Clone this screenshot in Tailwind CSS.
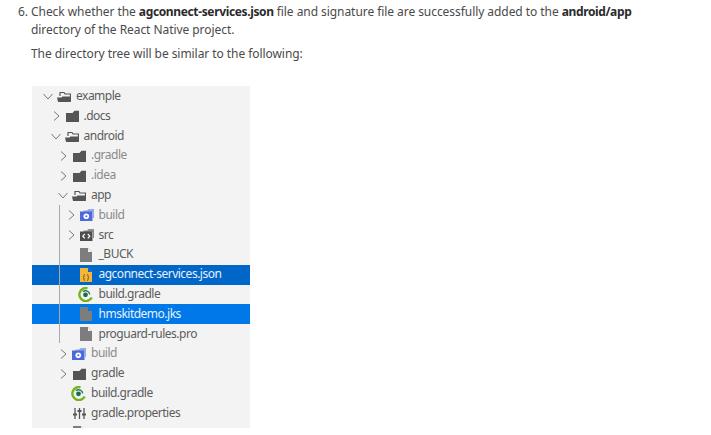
<!DOCTYPE html>
<html lang="en">
  <head>
    <meta charset="UTF-8" />
    <meta name="viewport" content="width=device-width, initial-scale=1.0" />
    <title>Directory tree</title>
    <script src="https://cdn.jsdelivr.net/npm/@tailwindcss/browser@4"></script>
  </head>
  <body class="bg-white h-[435px] overflow-hidden font-['Noto_Sans',sans-serif] text-[12px] tracking-[-0.06px] text-[#4a4a4a]">
    <svg class="hidden">
      <symbol id="chev-r" viewBox="0 0 10 10"><path d="M3 .5l5 4.500-5 4.500" fill="none" stroke="#777" stroke-width="1"/></symbol>
      <symbol id="chev-d" viewBox="0 0 10 10"><path d="M.5 3l4.500 5 4.500-5" fill="none" stroke="#777" stroke-width="1"/></symbol>
      <symbol id="open" viewBox="0 0 14 11"><path d="M3 5V1.500h4L8 3h5.500v7.500" fill="none" stroke="#555" stroke-width="1.200"/><path d="M0 6.500h4.500L5.500 5.500H13.800V11H1z" fill="#555"/></symbol>
      <symbol id="closed" viewBox="0 0 13 12"><path d="M0 3h6.500L8.500 0.800H13V12H0z" fill="#555"/></symbol>
      <symbol id="build" viewBox="0 0 14 12"><path d="M3.500 1.500h3.500L8.500 0H14v9h-1V3H3.500z" fill="#9aa8e4"/><path d="M0 2.500h12.500V12H0z" fill="#4a69dc"/><circle cx="6.300" cy="7.200" r="2.800" fill="#fff"/><circle cx="6.300" cy="7.200" r="1" fill="#4a69dc"/></symbol>
      <symbol id="src" viewBox="0 0 14 12"><path d="M3.500 1.500h3.500L8.500 0H14v9h-1V3H3.500z" fill="#8f8f8f"/><path d="M0 2.500h12.500V12H0z" fill="#4d4d4d"/><path d="M4.800 5L2.800 7.200l2 2.200M7.800 5l2 2.200-2 2.200" fill="none" stroke="#fff" stroke-width="1.200"/></symbol>
      <symbol id="file" viewBox="0 0 12 14"><path d="M0 0H8L12 4V14H0z" fill="#7d7d7d"/><path d="M8 0V4H12z" fill="#f3f3f3"/></symbol>
      <symbol id="file-sel" viewBox="0 0 12 14"><path d="M0 0H8L12 4V14H0z" fill="#7d7d7d"/><path d="M8 0V4H12z" fill="#0078e7"/></symbol>
      <symbol id="json" viewBox="0 0 12 14"><path d="M0 0H8L12 4V14H0z" fill="#f2b63c"/><path d="M8 0V4H12z" fill="#0066c8"/><path d="M4.800 6.500c-1 0-.8.800-.8 1.800 0 .7-.4 1-.9 1.200.5.200.9.500.9 1.200 0 1-.2 1.800.8 1.800M7.200 6.500c1 0 .8.800.8 1.800 0 .7.400 1 .9 1.200-.5.200-.9.500-.9 1.200 0 1 .2 1.800-.8 1.800" fill="none" stroke="#6b4800" stroke-width=".9"/></symbol>
      <symbol id="gradle" viewBox="0 0 15 15"><path d="M13.700 10.500A6.500 6.500 0 1 1 9.500 1.300" fill="none" stroke="#76b31c" stroke-width="2.400"/><path d="M5 4.700A4.200 4.200 0 0 1 11.800 7.500" fill="none" stroke="#1d7a57" stroke-width="1.400"/><circle cx="7.500" cy="7.800" r="2.400" fill="#1d6a4c"/></symbol>
      <symbol id="props" viewBox="0 0 13 11"><path d="M2 0v11M6.500 0v11M11 0v11" stroke="#555" stroke-width="1.300"/><path d="M0 6.500h4M4.500 3h4M9 6.500h4" stroke="#555" stroke-width="2"/></symbol>
    </svg>

    <div class="pl-[18px] pt-[3px] pr-[60px]">
      <div class="flex leading-[18px]">
        <span class="w-[13px] shrink-0">6.</span>
        <p>Check whether the <b class="font-bold tracking-[-0.36px] text-[#2b2b2b]">agconnect-services.json</b> file and signature file are successfully added to the <b class="font-bold tracking-[-0.36px] text-[#2b2b2b]">android/app</b> directory of the React Native project.</p>
      </div>
      <p class="ml-[13px] mt-[6px] leading-[18px]">The directory tree will be similar to the following:</p>
    </div>

    <div class="relative ml-[32px] mt-[23px] pt-[0.6px] w-[218px] h-[342px] overflow-hidden bg-[#f3f3f3] text-[#5c5c5c] text-[12px] tracking-[-0.5px] leading-none [&_span]:pb-[1px]">
      <div class="absolute left-[27px] top-[119px] h-[138px] w-px bg-[#a8a8a8]"></div>

      <div class="flex items-center h-[19.8px] pl-[11px]">
        <svg class="w-[10px] h-[10px]"><use href="#chev-d"/></svg>
        <svg class="ml-[4px] w-[14px] h-[11px]"><use href="#open"/></svg>
        <span class="ml-[5px]">example</span>
      </div>
      <div class="flex items-center h-[19.8px] pl-[18.500px]">
        <svg class="w-[10px] h-[10px]"><use href="#chev-r"/></svg>
        <svg class="ml-[5px] w-[13px] h-[12px]"><use href="#closed"/></svg>
        <span class="ml-[5px]">.docs</span>
      </div>
      <div class="flex items-center h-[19.8px] pl-[18.500px]">
        <svg class="w-[10px] h-[10px]"><use href="#chev-d"/></svg>
        <svg class="ml-[4px] w-[14px] h-[11px]"><use href="#open"/></svg>
        <span class="ml-[5px]">android</span>
      </div>
      <div class="flex items-center h-[19.8px] pl-[26px]">
        <svg class="w-[10px] h-[10px]"><use href="#chev-r"/></svg>
        <svg class="ml-[5px] w-[13px] h-[12px]"><use href="#closed"/></svg>
        <span class="ml-[5px] text-[#8a8a8a]">.gradle</span>
      </div>
      <div class="flex items-center h-[19.8px] pl-[26px]">
        <svg class="w-[10px] h-[10px]"><use href="#chev-r"/></svg>
        <svg class="ml-[5px] w-[13px] h-[12px]"><use href="#closed"/></svg>
        <span class="ml-[5px] text-[#8a8a8a]">.idea</span>
      </div>
      <div class="flex items-center h-[19.8px] pl-[26px]">
        <svg class="w-[10px] h-[10px]"><use href="#chev-d"/></svg>
        <svg class="ml-[4px] w-[14px] h-[11px]"><use href="#open"/></svg>
        <span class="ml-[5px]">app</span>
      </div>
      <div class="flex items-center h-[19.8px] pl-[33.500px]">
        <svg class="w-[10px] h-[10px]"><use href="#chev-r"/></svg>
        <svg class="ml-[4px] w-[14px] h-[12px]"><use href="#build"/></svg>
        <span class="ml-[5px] text-[#8a8a8a]">build</span>
      </div>
      <div class="flex items-center h-[19.8px] pl-[33.500px]">
        <svg class="w-[10px] h-[10px]"><use href="#chev-r"/></svg>
        <svg class="ml-[4px] w-[14px] h-[12px]"><use href="#src"/></svg>
        <span class="ml-[5px]">src</span>
      </div>
      <div class="flex items-center h-[19.8px] pl-[48px]">
        <svg class="w-[12px] h-[14px]"><use href="#file"/></svg>
        <span class="ml-[6.500px]">_BUCK</span>
      </div>
      <div class="flex items-center h-[19.8px] pl-[48px] bg-[#0066c8] text-[#e8f1fb]">
        <svg class="w-[12px] h-[14px]"><use href="#json"/></svg>
        <span class="ml-[6.500px]">agconnect-services.json</span>
      </div>
      <div class="flex items-center h-[19.8px] pl-[46px]">
        <svg class="w-[15px] h-[15px]"><use href="#gradle"/></svg>
        <span class="ml-[5.500px]">build.gradle</span>
      </div>
      <div class="flex items-center h-[19.8px] pl-[48px] bg-[#0078e7] text-[#e8f1fb]">
        <svg class="w-[12px] h-[14px]"><use href="#file-sel"/></svg>
        <span class="ml-[6.500px]">hmskitdemo.jks</span>
      </div>
      <div class="flex items-center h-[19.8px] pl-[48px]">
        <svg class="w-[12px] h-[14px]"><use href="#file"/></svg>
        <span class="ml-[6.500px]">proguard-rules.pro</span>
      </div>
      <div class="flex items-center h-[19.8px] pl-[26px]">
        <svg class="w-[10px] h-[10px]"><use href="#chev-r"/></svg>
        <svg class="ml-[4px] w-[14px] h-[12px]"><use href="#build"/></svg>
        <span class="ml-[5px] text-[#8a8a8a]">build</span>
      </div>
      <div class="flex items-center h-[19.8px] pl-[26px]">
        <svg class="w-[10px] h-[10px]"><use href="#chev-r"/></svg>
        <svg class="ml-[5px] w-[13px] h-[12px]"><use href="#closed"/></svg>
        <span class="ml-[5px]">gradle</span>
      </div>
      <div class="flex items-center h-[19.8px] pl-[39px]">
        <svg class="w-[15px] h-[15px]"><use href="#gradle"/></svg>
        <span class="ml-[5px]">build.gradle</span>
      </div>
      <div class="flex items-center h-[19.8px] pl-[41px]">
        <svg class="w-[13px] h-[11px]"><use href="#props"/></svg>
        <span class="ml-[5px]">gradle.properties</span>
      </div>
      <div class="flex items-center h-[19.8px] pl-[41px]">
        <svg class="w-[12px] h-[14px]"><use href="#file"/></svg>
      </div>
    </div>
  </body>
</html>
